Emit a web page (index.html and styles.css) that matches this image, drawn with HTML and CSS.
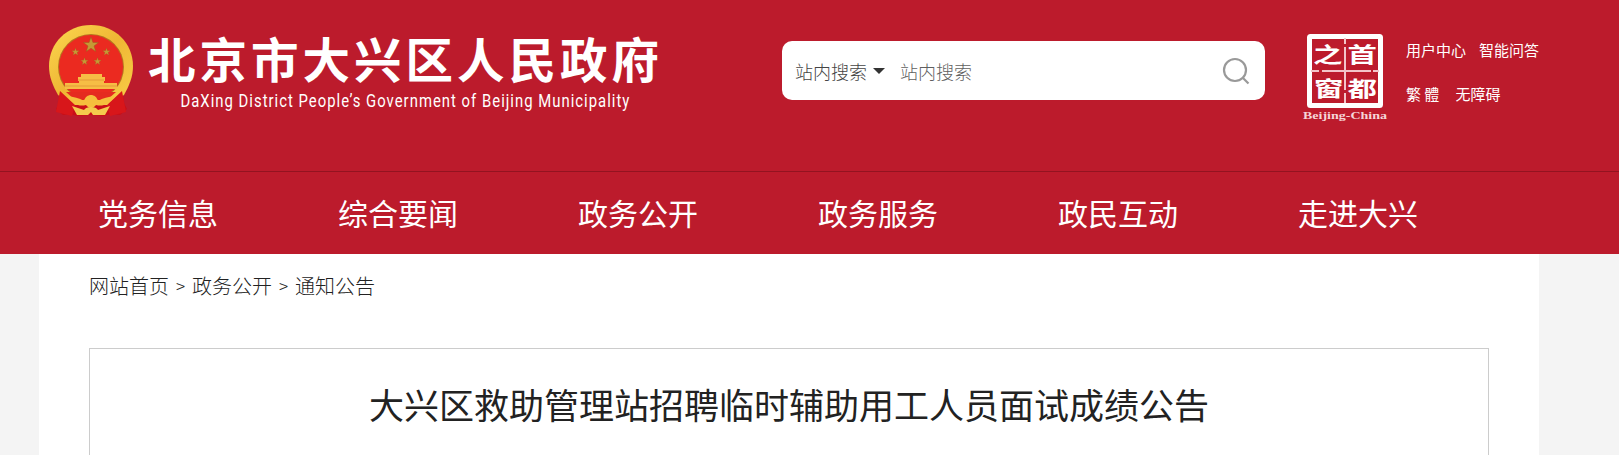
FILE: index.html
```html
<!DOCTYPE html>
<html lang="zh-cn">
<head>
    <meta charset="UTF-8">
    <meta name="viewport" content="width=device-width, initial-scale=1.0">
    <title>大兴区救助管理站招聘临时辅助用工人员面试成绩公告</title>
    <link rel="stylesheet" href="styles.css">
</head>
<body>
    <header class="header">
        <div class="top">
            <a class="logo">
                <svg class="emblem" width="88" height="94" viewBox="0 0 88 94">
                    <defs>
                        <linearGradient id="gold" x1="0" y1="0" x2="1" y2="1">
                            <stop offset="0" stop-color="#fbd850"/>
                            <stop offset="0.5" stop-color="#efb634"/>
                            <stop offset="1" stop-color="#f8cf48"/>
                        </linearGradient>
                        <path id="star" d="M0-1 .24-.32 .95-.31 .38.12 .59.81 0 .4-.59.81-.38.12-.95-.31-.24-.32z"/>
                    </defs>
                    <path d="M13 66 75 66 77 80 80 86 73 92 63 91 57 93 44 92 30 93 24 91 16 92 9 86 12 80z" fill="#c90f17"/>
                    <path d="M44 2C68 2 86 20 86 43c0 11-4 20-9 29L61 82H27L11 72C6 63 2 54 2 43 2 20 20 2 44 2z" fill="url(#gold)"/>
                    <path d="M13 68 28 82 25 93 9 89zM75 68 60 82 63 93 79 89z" fill="#d8161a"/>
                    <circle cx="44" cy="44" r="33" fill="#b5751f"/>
                    <circle cx="44" cy="44" r="32" fill="#eb2a20"/>
                    <g fill="#c59a35" stroke="#9b5a1c" stroke-width=".06">
                        <use href="#star" transform="translate(44 22) scale(8)"/>
                        <use href="#star" transform="translate(28.500 29) scale(4)"/>
                        <use href="#star" transform="translate(59.500 29) scale(4)"/>
                        <use href="#star" transform="translate(37.500 38.500) scale(4)"/>
                        <use href="#star" transform="translate(50.500 38.500) scale(4)"/>
                    </g>
                    <path d="M34 51h21v3h3v4h-1v3H32v-3h-1v-4h3zM18 60h52v6H18z" fill="#f6bd45"/>
                    <path d="M31 57h26M18 63h52" stroke="#dd8c30" stroke-width=".7"/>
                    <path d="M19 69h50L60 77H28z" fill="#e52a20"/>
                    <path d="M20 73c7 1 12 2 17 5 2-8 12-8 14 0 5-3 10-4 17-5-6 8-12 11-19 9-3 4-7 4-10 0-7 2-13-1-19-9z" fill="#f5bf3d"/>
                    <path d="M25 83l12 4c2-4 12-4 14 0l12-4-5 9H46l-2-3-3 3H30z" fill="#f4ca4d"/>
                </svg>
                <svg class="logo-text" width="530" height="94" viewBox="0 0 530 94">
                    <text class="logo-cn" x="8" y="55">北京市大兴区人民政府</text>
                    <text class="logo-en" transform="translate(40.500 84) scale(.85 1)" textLength="528">DaXing District People’s Government of Beijing Municipality</text>
                </svg>
            </a>
            <form class="search">
                <span class="search-type">站内搜索</span>
                <i class="caret"></i>
                <input class="search-input" type="text" placeholder="站内搜索">
                <svg class="search-icon" width="28" height="28" viewBox="0 0 28 28" fill="none" stroke="#999" stroke-width="2.200">
                    <circle cx="13" cy="13" r="11"/>
                    <path d="M20.500 20.500 26.500 26.500"/>
                </svg>
            </form>
            <svg class="capital" width="86" height="92" viewBox="0 0 86 92">
                <rect x="7.500" y="4.500" width="71" height="69" rx="1" fill="none" stroke="#fff" stroke-width="5"/>
                <path d="M43 6v6M43 15v43M43 61v10M9 39h8M20 39h49M71 39h6" stroke="#f3c4c9" stroke-width="2"/>
                <g class="capital-cn">
                    <text transform="translate(11 29.500) scale(1.400 1)">之</text>
                    <text transform="translate(45.500 29.500) scale(1.400 1)">首</text>
                    <text transform="translate(12 63.500) scale(1.400 1)">窗</text>
                    <text transform="translate(45.500 63.500) scale(1.400 1)">都</text>
                </g>
                <text class="capital-en" x="1" y="87" textLength="84" lengthAdjust="spacingAndGlyphs">Beijing-China</text>
            </svg>
            <div class="links">
                <div class="links-row"><a>用户中心</a><a>智能问答</a></div>
                <div class="links-row wide"><a>繁 體</a><a>无障碍</a></div>
            </div>
        </div>
        <nav class="nav">
            <a>党务信息</a>
            <a>综合要闻</a>
            <a>政务公开</a>
            <a>政务服务</a>
            <a>政民互动</a>
            <a>走进大兴</a>
        </nav>
    </header>
    <main class="main">
        <div class="crumbs"><a>网站首页</a><span>&gt;</span><a>政务公开</a><span>&gt;</span><a>通知公告</a></div>
        <article class="article">
            <h1>大兴区救助管理站招聘临时辅助用工人员面试成绩公告</h1>
        </article>
    </main>
</body>
</html>
```

FILE: styles.css
```css
* {
    box-sizing: border-box;
}

body {
    margin: 0;
    height: 455px;
    overflow: hidden;
    display: flex;
    flex-direction: column;
    background: #f4f4f4;
    font-family: "Noto Sans CJK SC", sans-serif;
    color: #222;
}

.header {
    background: #bc1b2c;
    color: #fff;
}

.top {
    display: flex;
    align-items: flex-start;
    height: 171px;
    padding-left: 47px;
}

.logo {
    display: flex;
    width: 735px;
    padding-top: 23px;
}

.logo-text {
    margin-left: 5px;
}

.logo-cn {
    font-size: 47.5px;
    font-weight: bold;
    letter-spacing: 4px;
    fill: #fff;
}

.logo-en {
    font-family: Roboto, sans-serif;
    font-size: 17.5px;
    fill: #fff;
}

.search {
    display: flex;
    align-items: center;
    width: 483px;
    height: 59px;
    margin-top: 41px;
    padding: 0 15px 0 13px;
    background: #fff;
    border-radius: 10px;
    font-size: 18px;
    font-weight: 300;
    color: #444;
}

.search-type {
    width: 72px;
}

.caret {
    margin-left: 6px;
    border: 6px solid transparent;
    border-top-color: #333;
    border-bottom: 0;
}

.search-input {
    flex: 1;
    min-width: 0;
    margin-left: 15px;
    padding: 0;
    border: 0;
    outline: 0;
    font: inherit;
}

.search-input::placeholder {
    color: #5f5f5f;
}

.capital {
    margin: 32px 0 0 37px;
}

.capital-cn {
    font-size: 21px;
    font-weight: bold;
    fill: #fff;
}

.capital-en {
    font-family: "Liberation Serif", serif;
    font-size: 11px;
    font-weight: bold;
    fill: #f6d5d8;
}

.links {
    margin: 39px 0 0 18px;
    font-size: 15px;
    line-height: 22px;
}

.links-row {
    display: flex;
    gap: 13px;
    margin-bottom: 22px;
}

.links-row.wide {
    gap: 16px;
}

.nav {
    display: flex;
    height: 83px;
    padding-left: 98px;
    border-top: 1px solid #931320;
    font-size: 30px;
    line-height: 81px;
}

.nav a {
    width: 240px;
}

.main {
    flex: 1;
    width: 1500px;
    margin-left: 39px;
    padding: 0 50px;
    background: #fff;
}

.crumbs {
    display: flex;
    height: 94px;
    font-size: 20px;
    font-weight: 300;
    line-height: 63px;
}

.crumbs span {
    width: 23px;
    text-align: center;
    font-size: 17px;
}

.article {
    height: 120px;
    border: 1px solid #ccc;
}

.article h1 {
    margin: 29px 0 0;
    font-size: 35px;
    font-weight: normal;
    line-height: 52px;
    text-align: center;
    color: #222;
}
```
